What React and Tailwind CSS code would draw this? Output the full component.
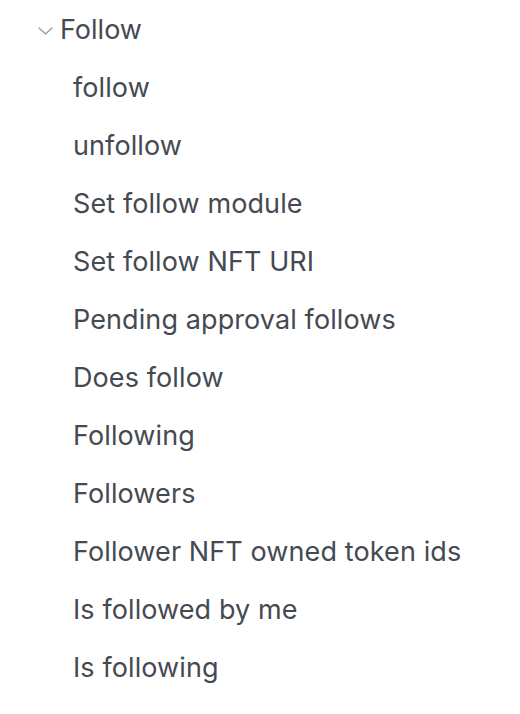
import React from 'react';

const items = [
  'follow',
  'unfollow',
  'Set follow module',
  'Set follow NFT URI',
  'Pending approval follows',
  'Does follow',
  'Following',
  'Followers',
  'Follower NFT owned token ids',
  'Is followed by me',
  'Is following',
];

export default function App() {
  return (
    <div
      className="w-[520px] h-[714px] bg-white text-[#454a52] text-[27px] overflow-hidden pt-[1px]"
      style={{ fontFamily: 'Inter, "Noto Sans", sans-serif' }}
    >
      <div className="flex h-[58px] items-center pl-[38px]">
        <svg width="15" height="10" viewBox="0 0 15 10" fill="none" className="mr-[7px] mt-[2px]">
          <path d="M1 2l6.5 6L14 2" stroke="#9aa0a8" strokeWidth="1.4" strokeLinecap="round" strokeLinejoin="round" />
        </svg>
        <span>Follow</span>
      </div>
      <ul className="flex flex-col">
        {items.map((label) => (
          <li key={label} className="flex h-[58px] items-center pl-[73px] whitespace-nowrap tracking-[0.1px]">
            {label}
          </li>
        ))}
      </ul>
    </div>
  );
}
